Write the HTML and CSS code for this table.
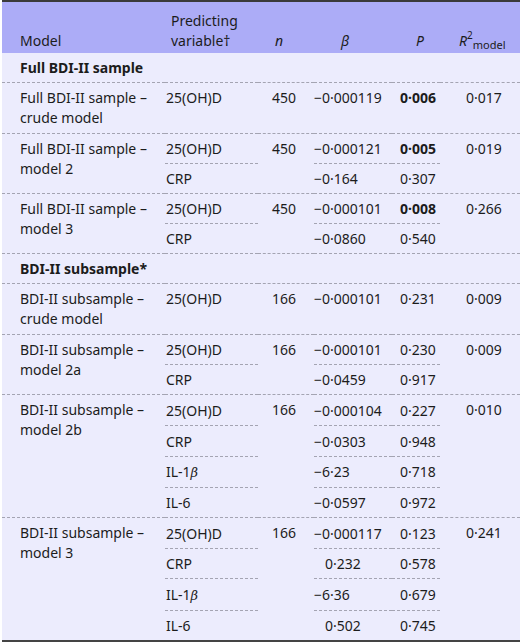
FILE: index.html
```html
<!DOCTYPE html>
<html lang="en">
<head>
    <meta charset="UTF-8">
    <meta name="viewport" content="width=device-width, initial-scale=1.0">
    <title>Regression models</title>
    <link rel="stylesheet" href="styles.css">
</head>
<body>
    <table class="tabela">
        <colgroup>
            <col class="c-model">
            <col class="c-var">
            <col class="c-n">
            <col class="c-beta">
            <col class="c-p">
            <col class="c-r2">
        </colgroup>
        <thead>
            <tr>
                <th class="model">Model</th>
                <th class="var">Predicting variable†</th>
                <th class="n"><i>n</i></th>
                <th class="beta"><i>β</i></th>
                <th class="p"><i>P</i></th>
                <th class="r2"><i>R</i><sup>2</sup><sub>model</sub></th>
            </tr>
        </thead>
        <tbody>
            <tr class="secao"><td colspan="6" class="model">Full BDI-II sample</td></tr>
        </tbody>
        <tbody class="dupla">
            <tr>
                <td class="model">Full BDI-II sample – crude model</td>
                <td class="var">25(OH)D</td>
                <td class="n">450</td>
                <td class="beta">−0·000119</td>
                <td class="p"><b>0·006</b></td>
                <td class="r2">0·017</td>
            </tr>
        </tbody>
        <tbody>
            <tr class="sub">
                <td class="model" rowspan="2">Full BDI-II sample – model 2</td>
                <td class="var">25(OH)D</td>
                <td class="n" rowspan="2">450</td>
                <td class="beta">−0·000121</td>
                <td class="p"><b>0·005</b></td>
                <td class="r2" rowspan="2">0·019</td>
            </tr>
            <tr>
                <td class="var">CRP</td>
                <td class="beta">−0·164</td>
                <td class="p">0·307</td>
            </tr>
        </tbody>
        <tbody>
            <tr class="sub">
                <td class="model" rowspan="2">Full BDI-II sample – model 3</td>
                <td class="var">25(OH)D</td>
                <td class="n" rowspan="2">450</td>
                <td class="beta">−0·000101</td>
                <td class="p"><b>0·008</b></td>
                <td class="r2" rowspan="2">0·266</td>
            </tr>
            <tr>
                <td class="var">CRP</td>
                <td class="beta">−0·0860</td>
                <td class="p">0·540</td>
            </tr>
        </tbody>
        <tbody>
            <tr class="secao"><td colspan="6" class="model">BDI-II subsample*</td></tr>
        </tbody>
        <tbody class="dupla">
            <tr>
                <td class="model">BDI-II subsample – crude model</td>
                <td class="var">25(OH)D</td>
                <td class="n">166</td>
                <td class="beta">−0·000101</td>
                <td class="p">0·231</td>
                <td class="r2">0·009</td>
            </tr>
        </tbody>
        <tbody>
            <tr class="sub">
                <td class="model" rowspan="2">BDI-II subsample – model 2a</td>
                <td class="var">25(OH)D</td>
                <td class="n" rowspan="2">166</td>
                <td class="beta">−0·000101</td>
                <td class="p">0·230</td>
                <td class="r2" rowspan="2">0·009</td>
            </tr>
            <tr>
                <td class="var">CRP</td>
                <td class="beta">−0·0459</td>
                <td class="p">0·917</td>
            </tr>
        </tbody>
        <tbody class="grande">
            <tr class="sub alto">
                <td class="model" rowspan="4">BDI-II subsample – model 2b</td>
                <td class="var">25(OH)D</td>
                <td class="n" rowspan="4">166</td>
                <td class="beta">−0·000104</td>
                <td class="p">0·227</td>
                <td class="r2" rowspan="4">0·010</td>
            </tr>
            <tr class="sub alto">
                <td class="var">CRP</td>
                <td class="beta">−0·0303</td>
                <td class="p">0·948</td>
            </tr>
            <tr class="sub">
                <td class="var">IL-1<i class="grego">β</i></td>
                <td class="beta">−6·23</td>
                <td class="p">0·718</td>
            </tr>
            <tr>
                <td class="var">IL-6</td>
                <td class="beta">−0·0597</td>
                <td class="p">0·972</td>
            </tr>
        </tbody>
        <tbody class="grande ultimo">
            <tr class="sub alto">
                <td class="model" rowspan="4">BDI-II subsample – model 3</td>
                <td class="var">25(OH)D</td>
                <td class="n" rowspan="4">166</td>
                <td class="beta">−0·000117</td>
                <td class="p">0·123</td>
                <td class="r2" rowspan="4">0·241</td>
            </tr>
            <tr class="sub">
                <td class="var">CRP</td>
                <td class="beta pos">0·232</td>
                <td class="p">0·578</td>
            </tr>
            <tr class="sub alto">
                <td class="var">IL-1<i class="grego">β</i></td>
                <td class="beta">−6·36</td>
                <td class="p">0·679</td>
            </tr>
            <tr>
                <td class="var">IL-6</td>
                <td class="beta pos">0·502</td>
                <td class="p">0·745</td>
            </tr>
        </tbody>
    </table>
</body>
</html>
```

FILE: styles.css
```css
* {
    margin: 0;
    padding: 0;
    box-sizing: border-box;
}
body {
    font-family: "Noto Sans", sans-serif;
    font-size: 14px;
    line-height: 20px;
    color: #1c1c1c;
    background: #fff;
}
.tabela {
    margin-left: 2px;
    width: 518px;
    border-collapse: collapse;
    table-layout: fixed;
    background-color: #ececfd;
    border-top: 2px solid #3a3a3a;
    border-bottom: 2px solid #444;
}
.c-model { width: 163px; }
.c-var { width: 93px; }
.c-n { width: 56px; }
.c-beta { width: 78px; }
.c-p { width: 48px; }
.c-r2 { width: 80px; }

thead th {
    background-color: #acacf7;
    font-weight: normal;
    text-align: left;
    vertical-align: bottom;
    height: 52px;
    padding: 0 0 2px 0;
}
thead .model { padding-left: 18px; }
thead .var { padding-left: 6px; }
thead .n { padding-left: 17px; }
thead .beta { padding-left: 27px; }
thead .p { padding-left: 24px; }
thead .r2 { padding-left: 19px; white-space: nowrap; }
thead sup {
    font-size: 10px;
    vertical-align: 7px;
    line-height: 0;
}
thead sub {
    font-size: 11px;
    vertical-align: -3px;
    line-height: 0;
}

td {
    vertical-align: top;
    padding: 5px 0 4px 0;
}
td.model { padding-left: 18px; }
td.var { padding-left: 1px; }
td.n { padding-left: 14px; }
td.beta { padding-left: 0; }
td.beta.pos { padding-left: 11px; }
td.p { padding-left: 8px; }
td.r2 { padding-left: 26px; }
td b { font-weight: bold; }

.secao td {
    font-weight: bold;
}
.dupla td {
    padding-bottom: 5px;
}
tbody {
    border-bottom: 1px dashed #a4a4b2;
}
tbody.ultimo {
    border-bottom: 2px solid #444;
}
tr.sub td.var,
tr.sub td.beta,
tr.sub td.p {
    border-bottom: 1px dashed #a4a4b2;
}
tr.alto td.var,
tr.alto td.beta,
tr.alto td.p {
    padding-top: 6px;
}
.grego {
    font-family: "DejaVu Serif", serif;
    font-size: 13px;
}
```
